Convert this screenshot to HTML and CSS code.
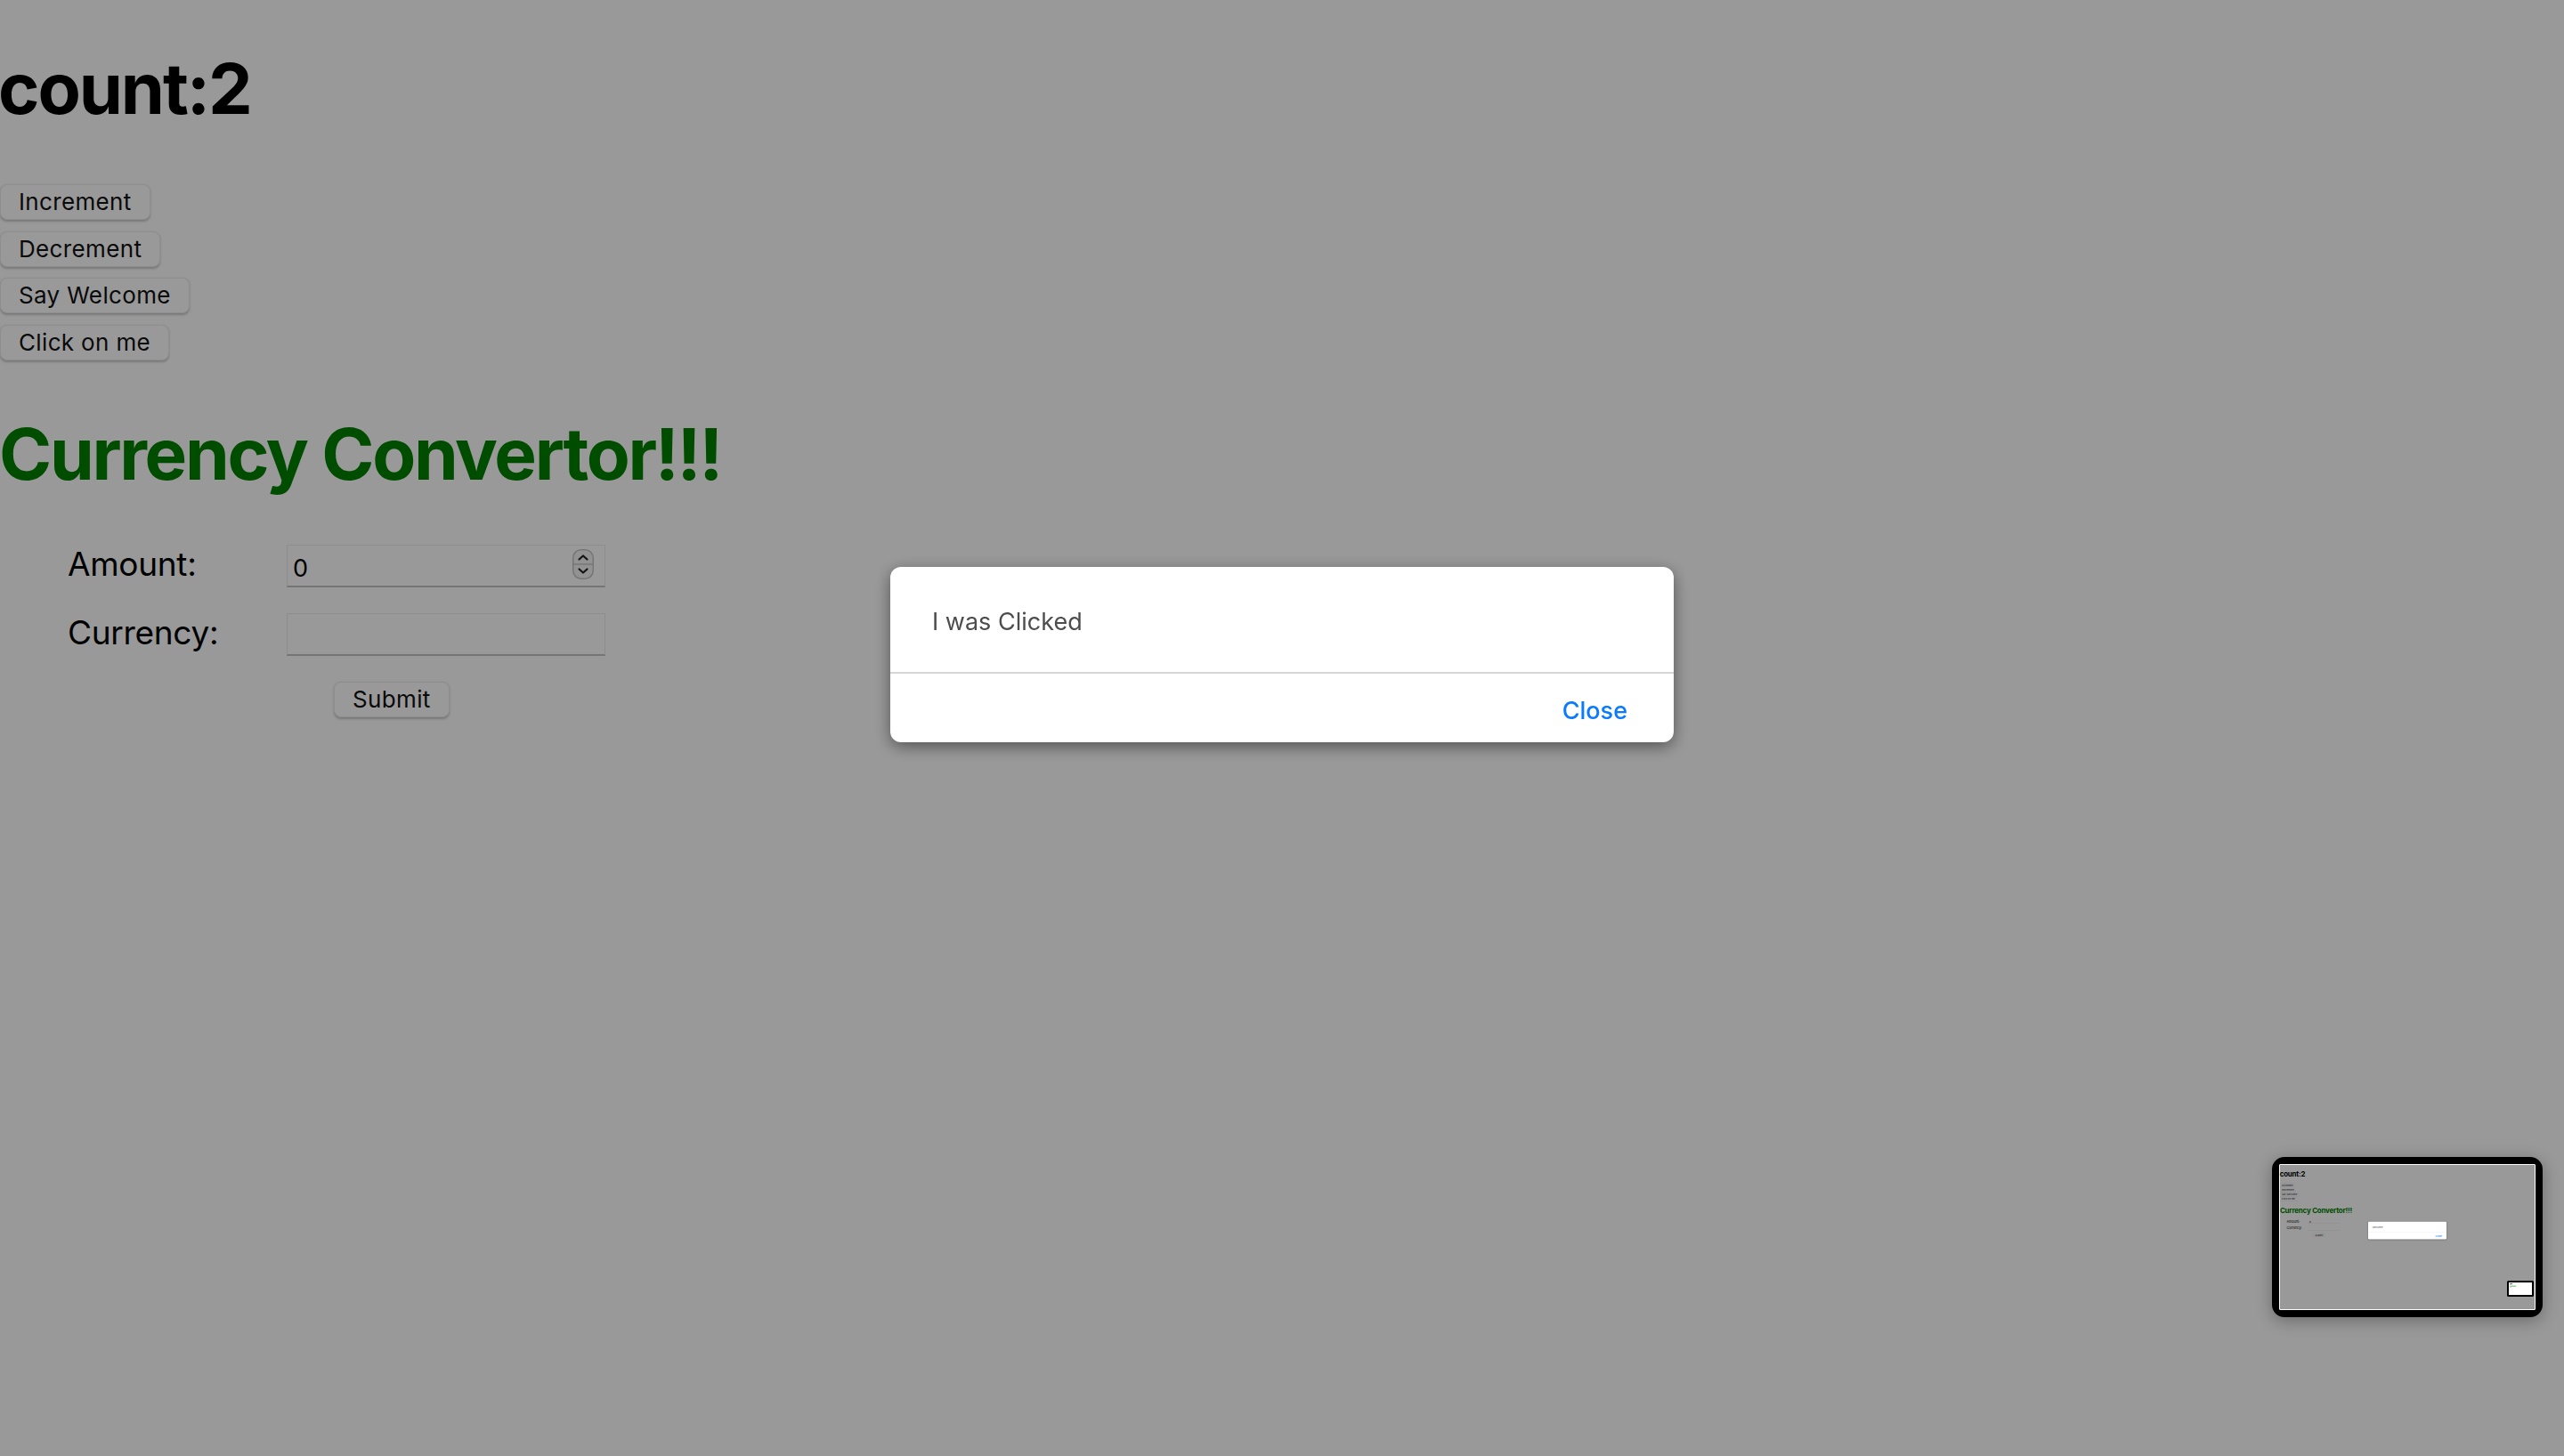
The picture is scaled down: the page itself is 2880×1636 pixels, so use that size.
FILE: index.html
```html
<!DOCTYPE html>
<html lang="en">
<head>
<meta charset="utf-8">
<title>Counter</title>
<link rel="stylesheet" href="styles.css">
</head>
<body>
<div class="app">
  <h1 class="count">count:2</h1>
  <div class="btns">
    <button class="btn">Increment</button>
    <button class="btn">Decrement</button>
    <button class="btn">Say Welcome</button>
    <button class="btn">Click on me</button>
  </div>
  <h1 class="title">Currency Convertor!!!</h1>
  <form class="conv">
    <label class="lbl">Amount:</label>
    <div class="field"><input class="inp" type="text" value="0"><span class="spin"><svg width="24" height="34" viewBox="0 0 24 34"><rect x="0.75" y="0.75" width="22.5" height="32.5" rx="9" fill="#f4f4f4" stroke="#c4c4c4" stroke-width="1.5"/><line x1="1" y1="17" x2="23" y2="17" stroke="#c4c4c4" stroke-width="1.5"/><path d="M7.5 11.5 L12 7.5 L16.5 11.5" fill="none" stroke="#222" stroke-width="2.2" stroke-linecap="round" stroke-linejoin="round"/><path d="M7.5 22.5 L12 26.5 L16.5 22.5" fill="none" stroke="#222" stroke-width="2.2" stroke-linecap="round" stroke-linejoin="round"/></svg></span></div>
    <label class="lbl">Currency:</label>
    <div class="field"><input class="inp" type="text" value=""></div>
    <button class="btn submit" type="button">Submit</button>
  </form>
</div>

<div class="overlay">
  <div class="modal">
    <div class="modal-body">I was Clicked</div>
    <div class="modal-foot"><button class="close" type="button">Close</button></div>
  </div>
</div>

<div class="preview">
  <div class="screen">
    <div class="mini">
      <div class="app">
        <h1 class="count">count:2</h1>
        <div class="btns">
          <button class="btn">Increment</button>
          <button class="btn">Decrement</button>
          <button class="btn">Say Welcome</button>
          <button class="btn">Click on me</button>
        </div>
        <h1 class="title">Currency Convertor!!!</h1>
        <div class="conv">
          <span class="lbl">Amount:</span>
          <div class="field"><span class="inp">0</span></div>
          <span class="lbl">Currency:</span>
          <div class="field"><span class="inp"></span></div>
          <button class="btn submit" type="button">Submit</button>
        </div>
      </div>
      <div class="overlay">
        <div class="modal">
          <div class="modal-body">Welcome</div>
          <div class="modal-foot"><span class="close">Close</span></div>
        </div>
      </div>
      <div class="minipreview">
        <div class="minipreview-screen">
          <div class="mm-line mm-black"></div>
          <div class="mm-line mm-gray"></div>
          <div class="mm-line mm-green"></div>
          <div class="mm-line mm-gray"></div>
        </div>
      </div>
    </div>
  </div>
</div>
</body>
</html>
```

FILE: styles.css
```css
html, body {
  margin: 0;
  padding: 0;
}
body {
  width: 2880px;
  height: 1636px;
  background: #ffffff;
  font-family: Inter, "Noto Sans", "Liberation Sans", sans-serif;
  color: #000;
  overflow: hidden;
  position: relative;
}

.app {
  display: flex;
  flex-direction: column;
  align-items: flex-start;
}

.count {
  margin: 60px 0 0 -2px;
  font-size: 79px;
  line-height: 1;
  font-weight: 700;
  letter-spacing: -2.1px;
}

.btns {
  margin-top: 68px;
  display: flex;
  flex-direction: column;
  align-items: flex-start;
  gap: 12.7px;
}

.btn {
  height: 40px;
  padding: 0 20px;
  font-family: Inter, "Noto Sans", "Liberation Sans", sans-serif;
  font-size: 26px;
  line-height: 1;
  color: #111;
  background: #ffffff;
  border: 1px solid #ededed;
  border-radius: 8px;
  box-shadow: 0 1.5px 2.5px rgba(0, 0, 0, 0.22);
  letter-spacing: 0.35px;
}

.title {
  margin: 65px 0 0 -1px;
  font-size: 80px;
  line-height: 1;
  font-weight: 700;
  color: #008000;
  letter-spacing: -2.3px;
}

.conv {
  margin-top: 62px;
  padding-left: 76px;
  display: grid;
  grid-template-columns: 246px 358px;
  grid-template-rows: 48px 48px 40px;
  row-gap: 29px;
  align-items: start;
}

.lbl {
  margin-top: 3px;
  font-size: 37px;
  line-height: 1;
  letter-spacing: -0.3px;
}

.field {
  height: 48px;
  box-sizing: border-box;
  border: 1px solid #ececec;
  border-bottom: 2px solid #c4c4c4;
  display: flex;
  align-items: center;
  background: #fff;
}

.inp {
  flex: 1;
  min-width: 0;
  height: 100%;
  box-sizing: border-box;
  border: none;
  outline: none;
  background: transparent;
  padding: 5px 0 0 6px;
  font-family: Inter, "Noto Sans", "Liberation Sans", sans-serif;
  font-size: 27px;
  color: #000;
  display: flex;
  align-items: center;
}

.spin {
  display: flex;
  margin-right: 12px;
  margin-top: -3px;
}

.submit {
  grid-column: 2;
  justify-self: start;
  margin-left: 53px;
}

/* dimming overlay and dialog */
.overlay {
  position: fixed;
  inset: 0;
  background: rgba(0, 0, 0, 0.4);
  display: flex;
  justify-content: center;
  align-items: flex-start;
  padding-top: 637px;
  box-sizing: border-box;
}

.modal {
  width: 880px;
  background: #fff;
  border-radius: 12px;
  box-shadow: 0 5px 18px rgba(0, 0, 0, 0.45);
  display: flex;
  flex-direction: column;
  overflow: hidden;
}

.modal-body {
  height: 120px;
  box-sizing: border-box;
  padding: 5px 0 0 47px;
  display: flex;
  align-items: center;
  font-size: 27px;
  color: #4d4d4d;
  border-bottom: 2px solid #d6d6d6;
}

.modal-foot {
  height: 77px;
  box-sizing: border-box;
  padding: 5px 52px 0 0;
  display: flex;
  align-items: center;
  justify-content: flex-end;
}

.close {
  border: none;
  background: none;
  padding: 0;
  font-family: Inter, "Noto Sans", "Liberation Sans", sans-serif;
  font-size: 27px;
  font-weight: 500;
  color: #0a7aff;
}

/* screen preview thumbnail */
.preview {
  position: absolute;
  left: 2552px;
  top: 1300px;
  width: 304px;
  height: 180px;
  box-sizing: border-box;
  border: 8px solid #000;
  border-radius: 14px;
  background: #000;
  box-shadow: 0 4px 18px rgba(0, 0, 0, 0.3);
  z-index: 5;
}

.screen {
  width: 288px;
  height: 164px;
  overflow: hidden;
  position: relative;
  background: #fff;
  border-radius: 2px;
}

.mini {
  width: 2880px;
  height: 1640px;
  transform: scale(0.1);
  transform-origin: 0 0;
  position: relative;
  background: #fff;
  border: 10px solid #fff;
  box-sizing: border-box;
}

.minipreview {
  position: absolute;
  left: 2550px;
  top: 1300px;
  width: 300px;
  height: 180px;
  box-sizing: border-box;
  border: 20px solid #000;
  border-radius: 16px;
  background: #000;
  z-index: 5;
}

.minipreview-screen {
  width: 100%;
  height: 100%;
  background: #fff;
  padding: 10px 12px;
  box-sizing: border-box;
  display: flex;
  flex-direction: column;
  gap: 8px;
}

.mm-line {
  height: 6px;
  width: 40px;
}
.mm-black { background: #000; width: 30px; }
.mm-gray { background: #bbb; width: 16px; }
.mm-green { background: #008000; width: 70px; }
```
